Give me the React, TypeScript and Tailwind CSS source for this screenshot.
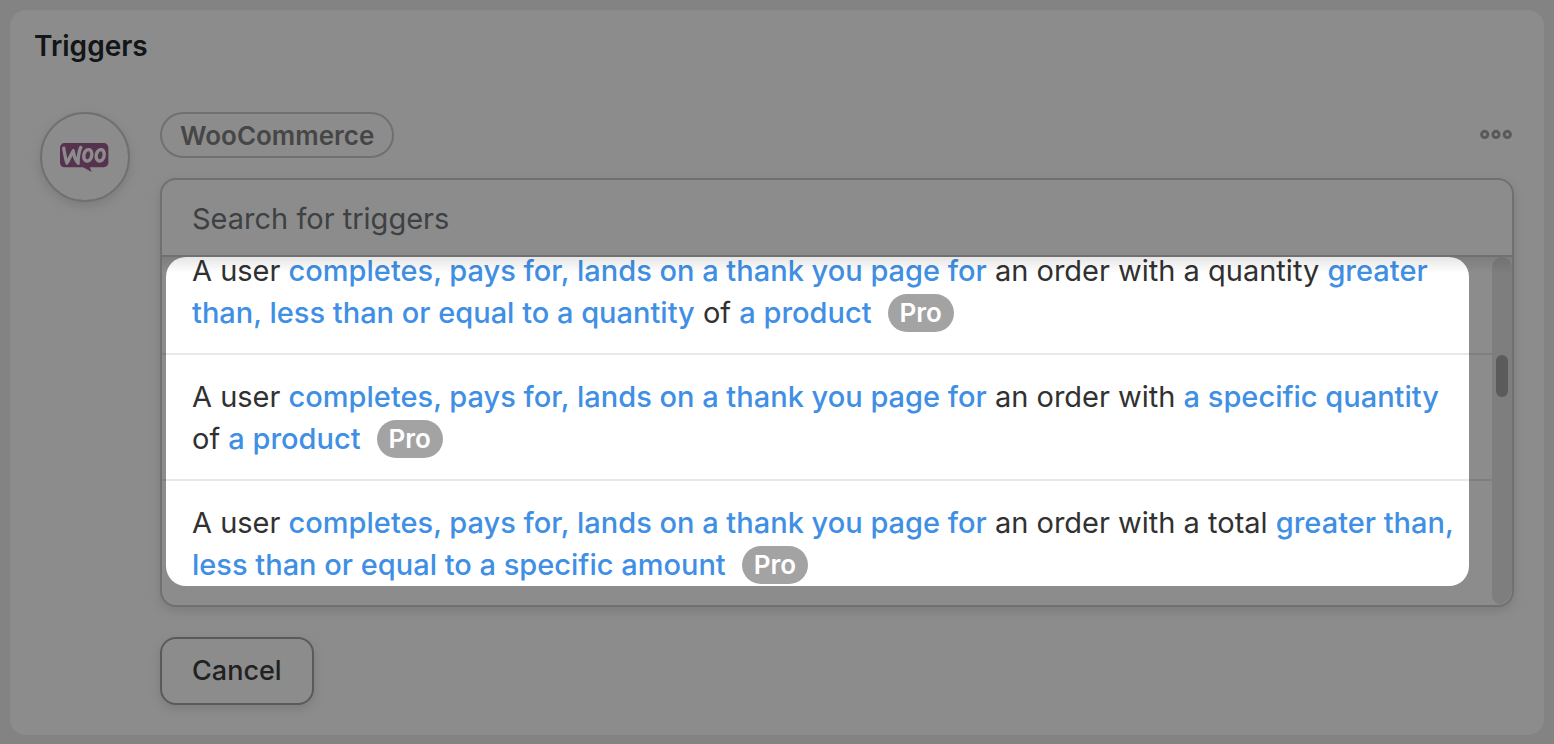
import React, { useState } from 'react';
import { SiWoocommerce } from 'react-icons/si';

type Part = { text: string; token?: boolean };

const triggers: Part[][] = [
  [
    { text: 'A user ' },
    { text: 'completes, pays for, lands on a thank you page for', token: true },
    { text: ' an order with a quantity ' },
    { text: 'greater than, less than or equal to a quantity', token: true },
    { text: ' of ' },
    { text: 'a product', token: true },
  ],
  [
    { text: 'A user ' },
    { text: 'completes, pays for, lands on a thank you page for', token: true },
    { text: ' an order with ' },
    { text: 'a specific quantity', token: true },
    { text: ' of ' },
    { text: 'a product', token: true },
  ],
  [
    { text: 'A user ' },
    { text: 'completes, pays for, lands on a thank you page for', token: true },
    { text: ' an order with a total ' },
    { text: 'greater than, less than or equal to a specific amount', token: true },
  ],
];

const TriggerOption: React.FC<{ parts: Part[] }> = ({ parts }) => (
  <li className="border-b-2 border-[#e8e8e8]">
    <button type="button" className="block w-full pb-[19px] pl-[30px] pr-5 pt-[21px] text-left text-[29px] leading-[42px] text-[#313131]">
      {parts.map((part, i) =>
        part.token ? (
          <span key={i} className="font-medium text-[#3f8fe4]">{part.text}</span>
        ) : (
          <span key={i}>{part.text}</span>
        )
      )}
      <span className="-mt-1 ml-4 inline-flex h-[38px] items-center rounded-full bg-[#a3a3a3] px-3 align-middle text-[26px] font-semibold text-white">
        Pro
      </span>
    </button>
  </li>
);

const App: React.FC = () => {
  const [query, setQuery] = useState('');

  return (
    <div className="min-h-screen overflow-hidden bg-[#eeeeee] p-[10px] font-['Inter',sans-serif]">
      <main className="rounded-2xl bg-white px-[30px] pb-[30px] pt-4">
        <h2 className="-ml-[6px] text-[28px] font-semibold leading-10 text-[#23282d]">Triggers</h2>

        <div className="mt-[46px] flex items-start gap-[30px]">
          <div className="flex size-[90px] shrink-0 items-center justify-center rounded-full border-2 border-[#cccccc] bg-white shadow-[0_4px_12px_rgba(0,0,0,0.12)]">
            {/* viewBox crops the wordmark down to the speech bubble */}
            <SiWoocommerce viewBox="0 9.6 8.4 4.8" className="h-[29px] w-[50px] text-[#9b5c8f]" />
          </div>

          <div className="min-w-0 flex-1">
            <div className="flex items-start justify-between">
              <span className="flex h-[46px] items-center rounded-full border-2 border-[#cccccc] px-[18px] text-[26px] font-semibold text-[#808080]">
                WooCommerce
              </span>
              <button type="button" aria-label="More options" className="mt-4 text-[#a4a4a4]">
                <svg width="34" height="12" viewBox="0 0 34 12" fill="none" stroke="currentColor" strokeWidth="3">
                  <circle cx="4.7" cy="6.4" r="3.1" />
                  <circle cx="16" cy="6.4" r="3.1" />
                  <circle cx="27.3" cy="6.4" r="3.1" />
                </svg>
              </button>
            </div>

            <div className="mt-5 rounded-2xl border-2 border-[#cccccc] bg-white shadow-[0_4px_12px_rgba(0,0,0,0.12)]">
              <input
                type="text"
                aria-label="Search for triggers"
                placeholder="Search for triggers"
                value={query}
                onChange={(e) => setQuery(e.target.value)}
                className="block h-[77px] w-full border-b-2 border-[#cccccc] bg-transparent px-[30px] pt-[2px] text-[29px] text-[#313131] outline-none placeholder:text-[#72777c]"
              />
              <div className="relative">
                <div className="flex h-[348px] overflow-hidden rounded-b-2xl">
                  <ul className="-mt-7 min-w-0 flex-1">
                    {triggers.map((parts, i) => (
                      <TriggerOption key={i} parts={parts} />
                    ))}
                  </ul>
                  <div className="w-5 rounded-full bg-[#e5e5e5] px-1 pt-[98px]">
                    <div className="h-[42px] rounded-full bg-[#a7a7a7]" />
                  </div>
                </div>
                <div className="pointer-events-none absolute inset-x-0 top-0 h-4 bg-linear-to-b from-black/10 to-transparent" />
                {/* Spotlight: dims everything outside the highlighted options */}
                <div className="pointer-events-none absolute bottom-[19px] left-1 right-[43px] top-0 rounded-[20px] shadow-[0_0_0_2000px_rgba(0,0,0,0.45)]" />
              </div>
            </div>

            <button
              type="button"
              className="mt-[30px] h-[68px] rounded-2xl border-2 border-[#a4a4a4] bg-white px-[30px] pt-px text-[27px] font-medium text-[#3c3c3c] shadow-[0_4px_12px_rgba(0,0,0,0.12)]"
            >
              Cancel
            </button>
          </div>
        </div>
      </main>
    </div>
  );
};

export default App;
